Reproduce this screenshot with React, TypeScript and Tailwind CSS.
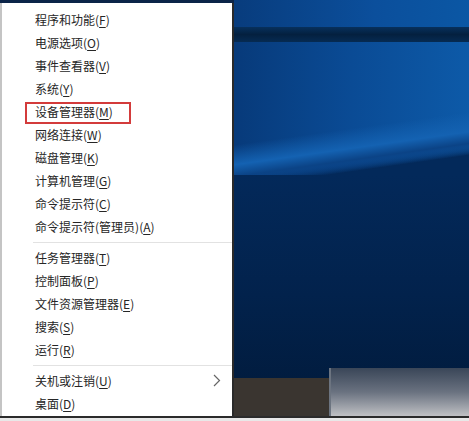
const groups: { label: string; key: string; sub?: boolean; mark?: boolean }[][] = [
  [
    { label: '程序和功能', key: 'F' },
    { label: '电源选项', key: 'O' },
    { label: '事件查看器', key: 'V' },
    { label: '系统', key: 'Y' },
    { label: '设备管理器', key: 'M', mark: true },
    { label: '网络连接', key: 'W' },
    { label: '磁盘管理', key: 'K' },
    { label: '计算机管理', key: 'G' },
    { label: '命令提示符', key: 'C' },
    { label: '命令提示符(管理员)', key: 'A' },
  ],
  [
    { label: '任务管理器', key: 'T' },
    { label: '控制面板', key: 'P' },
    { label: '文件资源管理器', key: 'E' },
    { label: '搜索', key: 'S' },
    { label: '运行', key: 'R' },
  ],
  [
    { label: '关机或注销', key: 'U', sub: true },
    { label: '桌面', key: 'D' },
  ],
];

const MenuItem = ({ label, keyChar, sub, mark }: { label: string; keyChar: string; sub?: boolean; mark?: boolean }) => (
  <div className="relative flex h-[23px] items-center pl-[33px] pr-[10px] text-[12px] leading-none text-[#262626]">
    <span className="flex-1 whitespace-nowrap">
      {label}(<span className="underline underline-offset-2">{keyChar}</span>)
    </span>
    {sub && (
      <svg width="8" height="13" viewBox="0 0 8 13" className="mr-[1px]">
        <polyline points="1,1 6.5,6.5 1,12" fill="none" stroke="#666" strokeWidth="1.2" />
      </svg>
    )}
    {mark && <div className="absolute left-[23px] top-[2px] h-[22px] w-[106px] border-2 border-[#d33b3b]" />}
  </div>
);

const App = () => {
  return (
    <div
      className="flex h-[421px] w-[469px] flex-col overflow-hidden bg-[#0b2448]"
      style={{ fontFamily: '"Noto Sans CJK SC", "Noto Sans", sans-serif' }}
    >
      <div className="flex h-[416px]">
        <div className="w-[234px] pt-[3px]">
          <div className="h-[413px] border-l-2 border-r-2 border-l-[#c4c4c4] border-r-[#2a2a2a] bg-white pt-[5px]">
            {groups.map((g, gi) => (
              <div key={gi}>
                {gi > 0 && (
                  <div className="flex h-[8px] items-center pl-[31px]">
                    <div className="h-px w-full bg-[#e2e2e2]" />
                  </div>
                )}
                {g.map((it) => (
                  <MenuItem key={it.label} label={it.label} keyChar={it.key} sub={it.sub} mark={it.mark} />
                ))}
              </div>
            ))}
          </div>
        </div>
        <div className="flex flex-1 flex-col">
          <div className="h-[27px] bg-[linear-gradient(90deg,#083c7d,#0b4f9c_60%,#0b57a4)]" />
          <div className="h-[15px] bg-[linear-gradient(180deg,#07305c,#04203f_50%,#062b52)]" />
          <div className="h-[133px] bg-[linear-gradient(172deg,transparent_62%,#1462b2_74%,#0b4386_81%,transparent_88%),linear-gradient(172deg,transparent_82%,#03295a_88%),linear-gradient(90deg,#073a7a,#0a4b95_50%,#0d5aa8)]" />
          <div className="flex flex-1 flex-col justify-end bg-[linear-gradient(180deg,#03295a,#02224c_50%,#011a3a)]">
            <div className="flex items-end">
              <div className="h-[38px] w-[95px] bg-[#3a3530]" />
              <div className="h-[48px] flex-1 border-l-2 border-[#6c7480] bg-linear-to-b from-[#3a4658] via-[#6a7280] to-[#c0c1c4]" />
            </div>
          </div>
        </div>
      </div>
      <div className="h-[2px] bg-[#2b2b2b]" />
      <div className="flex-1 bg-[#e8e8e8]" />
    </div>
  );
};

export default App;
